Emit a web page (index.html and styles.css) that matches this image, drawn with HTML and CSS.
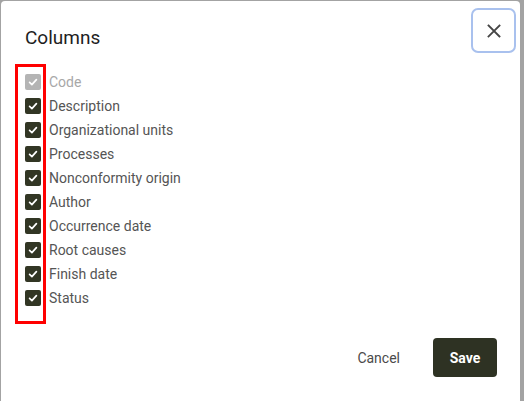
FILE: index.html
```html
<!DOCTYPE html>
<html>
<head>
<meta charset="utf-8">
<link rel="stylesheet" href="styles.css">
</head>
<body>
<div class="dialog">
  <div class="header">
    <h2 class="title">Columns</h2>
    <button class="close" aria-label="Close">
      <svg width="14" height="14" viewBox="0 0 14 14"><path d="M1.5 1.5 L12.5 12.5 M12.5 1.5 L1.5 12.5" stroke="#454545" stroke-width="1.8" stroke-linecap="square" fill="none"/></svg>
    </button>
  </div>
  <ul class="list">
    <li class="row disabled"><span class="cb"><svg width="16" height="16" viewBox="0 0 16 16"><path d="M4.6 8.4 L6.9 10.6 L11.4 5.6" stroke="#fff" stroke-width="1.7" fill="none" stroke-linecap="round" stroke-linejoin="round"/></svg></span><span class="lbl">Code</span></li>
    <li class="row"><span class="cb"><svg width="16" height="16" viewBox="0 0 16 16"><path d="M4.6 8.4 L6.9 10.6 L11.4 5.6" stroke="#fff" stroke-width="1.7" fill="none" stroke-linecap="round" stroke-linejoin="round"/></svg></span><span class="lbl">Description</span></li>
    <li class="row"><span class="cb"><svg width="16" height="16" viewBox="0 0 16 16"><path d="M4.6 8.4 L6.9 10.6 L11.4 5.6" stroke="#fff" stroke-width="1.7" fill="none" stroke-linecap="round" stroke-linejoin="round"/></svg></span><span class="lbl">Organizational units</span></li>
    <li class="row"><span class="cb"><svg width="16" height="16" viewBox="0 0 16 16"><path d="M4.6 8.4 L6.9 10.6 L11.4 5.6" stroke="#fff" stroke-width="1.7" fill="none" stroke-linecap="round" stroke-linejoin="round"/></svg></span><span class="lbl">Processes</span></li>
    <li class="row"><span class="cb"><svg width="16" height="16" viewBox="0 0 16 16"><path d="M4.6 8.4 L6.9 10.6 L11.4 5.6" stroke="#fff" stroke-width="1.7" fill="none" stroke-linecap="round" stroke-linejoin="round"/></svg></span><span class="lbl">Nonconformity origin</span></li>
    <li class="row"><span class="cb"><svg width="16" height="16" viewBox="0 0 16 16"><path d="M4.6 8.4 L6.9 10.6 L11.4 5.6" stroke="#fff" stroke-width="1.7" fill="none" stroke-linecap="round" stroke-linejoin="round"/></svg></span><span class="lbl">Author</span></li>
    <li class="row"><span class="cb"><svg width="16" height="16" viewBox="0 0 16 16"><path d="M4.6 8.4 L6.9 10.6 L11.4 5.6" stroke="#fff" stroke-width="1.7" fill="none" stroke-linecap="round" stroke-linejoin="round"/></svg></span><span class="lbl">Occurrence date</span></li>
    <li class="row"><span class="cb"><svg width="16" height="16" viewBox="0 0 16 16"><path d="M4.6 8.4 L6.9 10.6 L11.4 5.6" stroke="#fff" stroke-width="1.7" fill="none" stroke-linecap="round" stroke-linejoin="round"/></svg></span><span class="lbl">Root causes</span></li>
    <li class="row"><span class="cb"><svg width="16" height="16" viewBox="0 0 16 16"><path d="M4.6 8.4 L6.9 10.6 L11.4 5.6" stroke="#fff" stroke-width="1.7" fill="none" stroke-linecap="round" stroke-linejoin="round"/></svg></span><span class="lbl">Finish date</span></li>
    <li class="row"><span class="cb"><svg width="16" height="16" viewBox="0 0 16 16"><path d="M4.6 8.4 L6.9 10.6 L11.4 5.6" stroke="#fff" stroke-width="1.7" fill="none" stroke-linecap="round" stroke-linejoin="round"/></svg></span><span class="lbl">Status</span></li>
  </ul>
  <div class="highlight"></div>
  <div class="footer">
    <button class="btn cancel">Cancel</button>
    <button class="btn save">Save</button>
  </div>
</div>
</body>
</html>
```
FILE: styles.css
```css
* { box-sizing: border-box; }
html, body { margin: 0; height: 100%; }
body {
  background: #a3a3a3;
  padding: 1px 4px 0 1px;
  font-family: Roboto, "Liberation Sans", sans-serif;
  overflow: hidden;
}
.dialog {
  position: relative;
  background: #fff;
  border-radius: 4px;
  height: 410px;
  display: flex;
  flex-direction: column;
}
.header {
  display: flex;
  justify-content: space-between;
  align-items: flex-start;
  padding: 0 4px 0 24px;
}
.title {
  margin: 25px 0 0 0;
  font-size: 19px;
  line-height: 24px;
  font-weight: 400;
  color: #1e1e1e;
}
.close {
  margin-top: 7px;
  width: 45px;
  height: 45px;
  border: 2px solid #a9c1ee;
  border-radius: 7px;
  background: #fff;
  display: flex;
  align-items: center;
  justify-content: center;
  padding: 0;
}
.list {
  list-style: none;
  margin: 17px 0 0 0;
  padding: 0 0 0 24px;
}
.row {
  display: flex;
  align-items: center;
  height: 24px;
  gap: 8px;
}
.cb {
  width: 16px;
  height: 16px;
  border-radius: 2px;
  background: #323624;
  display: block;
}
.cb svg { display: block; }
.lbl {
  font-size: 14px;
  color: #555;
}
.disabled .cb { background: #b4b4b4; }
.disabled .lbl { color: #a8a8a8; }
.highlight {
  position: absolute;
  left: 14px;
  top: 63px;
  width: 31px;
  height: 260px;
  border: 3px solid #f00;
}
.footer {
  display: flex;
  justify-content: flex-end;
  gap: 17px;
  margin-top: 28px;
  padding-right: 23px;
}
.btn {
  height: 39px;
  font-family: Roboto, "Liberation Sans", sans-serif;
  font-size: 14px;
  font-weight: 400;
  border: none;
  border-radius: 4px;
  padding: 0 16px;
  cursor: pointer;
}
.cancel { background: transparent; color: #4a4a4a; }
.save { background: #2e3223; color: #fff; width: 64px; padding: 0; font-weight: 700; }
```
